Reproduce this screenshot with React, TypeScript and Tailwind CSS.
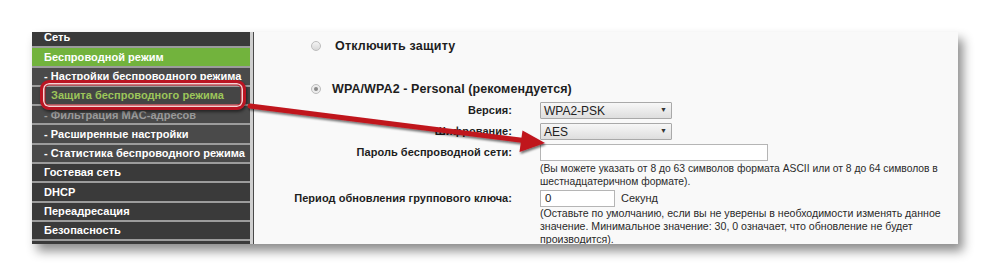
import React from "react";

const font = { fontFamily: '"Liberation Sans", Arial, sans-serif' };

function Row({
  label,
  bg,
  color = "text-white",
  indent = "pl-[12px]",
}: {
  label: string;
  bg: string;
  color?: string;
  indent?: string;
}) {
  return (
    <div
      className={`h-[19.3px] shrink-0 border-b-2 border-[#9c9c9c] flex items-center text-[11px] font-bold tracking-[0.05px] whitespace-nowrap ${indent} ${bg} ${color}`}
    >
      {label}
    </div>
  );
}

function Select({ value }: { value: string }) {
  return (
    <div className="w-[132px] h-[17px] border border-[#a9a9a9] bg-gradient-to-b from-[#f7f7f7] to-[#dedede] flex items-center justify-between pl-[3px] pr-[4px] text-[12px] text-[#222] rounded-[1px]">
      <span>{value}</span>
      <span className="text-[7px] text-[#333]">▼</span>
    </div>
  );
}

export default function App() {
  return (
    <div className="w-[990px] h-[276px] bg-white relative overflow-hidden" style={font}>
      <div className="ml-[32px] mt-[32px] w-[926px] h-[212px] flex overflow-hidden shadow-[5px_7px_10px_rgba(0,0,0,0.45)] bg-[#f8f8f8]">
        {/* Sidebar */}
        <div className="w-[218px] shrink-0 bg-[#3c3c3c] flex flex-col -mt-[3px]">
          <Row label="Сеть" bg="bg-[#3a3a3a]" />
          <Row label="Беспроводной режим" bg="bg-[#72b33d]" />
          <Row label="- Настройки беспроводного режима" bg="bg-[#4a4a4a]" />
          <Row label="Защита беспроводного режима" bg="bg-[#454545]" color="text-[#9cc55a]" indent="pl-[19px]" />
          <Row label="- Фильтрация MAC-адресов" bg="bg-[#4a4a4a]" color="text-[#9a9a9a]" />
          <Row label="- Расширенные настройки" bg="bg-[#4a4a4a]" />
          <Row label="- Статистика беспроводного режима" bg="bg-[#4a4a4a]" />
          <Row label="Гостевая сеть" bg="bg-[#3a3a3a]" />
          <Row label="DHCP" bg="bg-[#3a3a3a]" />
          <Row label="Переадресация" bg="bg-[#3a3a3a]" />
          <Row label="Безопасность" bg="bg-[#3a3a3a]" />
          <Row label="" bg="bg-[#3a3a3a]" />
        </div>
        <div className="w-[3px] shrink-0 bg-[#cfcfcf]" />
        <div className="w-[1px] shrink-0 bg-[#4a4a4a]" />
        {/* Content */}
        <div className="flex-1 bg-[#f9f9f9] pt-[6px] text-[#1e1e1e]">
          <div className="flex items-center h-[16px] pl-[57px]">
            <span className="w-[10px] h-[10px] rounded-full border border-[#bdbdbd] bg-gradient-to-b from-[#f4f4f4] to-[#d8d8d8]" />
            <span className="ml-[14px] text-[12.5px] font-bold tracking-[0.2px]">Отключить защиту</span>
          </div>
          <div className="flex items-center h-[16px] pl-[57px] mt-[27px]">
            <span className="w-[10px] h-[10px] rounded-full border border-[#bdbdbd] bg-[#ececec] flex items-center justify-center">
              <span className="w-[4px] h-[4px] rounded-full bg-[#8a8a8a]" />
            </span>
            <span className="ml-[11px] text-[12.5px] font-bold tracking-[0.1px]">WPA/WPA2 - Personal (рекомендуется)</span>
          </div>
          <div className="grid grid-cols-[258px_1fr] gap-x-[28px] mt-[5px] text-[11px]">
            <div className="h-[17px] flex items-center justify-end font-bold tracking-[0.05px]">Версия:</div>
            <div className="h-[17px]"><Select value="WPA2-PSK" /></div>
            <div className="h-[17px] mt-[4px] flex items-center justify-end font-bold tracking-[0.05px]">Шифрование:</div>
            <div className="h-[17px] mt-[4px]"><Select value="AES" /></div>
            <div className="h-[17px] mt-[4px] flex items-center justify-end font-bold tracking-[0.05px]">Пароль беспроводной сети:</div>
            <div className="h-[17px] mt-[4px]">
              <div className="w-[228px] h-[17px] border border-[#b5b5b5] bg-white" />
            </div>
            <div />
            <div className="mt-[1px] text-[10.3px] leading-[13px] text-[#2a2a2a] whitespace-nowrap">
              (Вы можете указать от 8 до 63 символов формата ASCII или от 8 до 64 символов в
              <br />
              шестнадцатеричном формате).
            </div>
            <div className="h-[17px] mt-[2px] flex items-center justify-end font-bold tracking-[0.05px]">Период обновления группового ключа:</div>
            <div className="h-[17px] mt-[2px] flex items-center">
              <div className="w-[75px] h-[17px] border border-[#b5b5b5] bg-white text-[11.5px] pl-[4px] flex items-center">0</div>
              <span className="ml-[6px] text-[11px] text-[#2a2a2a]">Секунд</span>
            </div>
            <div />
            <div className="mt-0 text-[10.6px] leading-[13px] text-[#2a2a2a] whitespace-nowrap">
              (Оставьте по умолчанию, если вы не уверены в необходимости изменять данное
              <br />
              значение. Минимальное значение: 30, 0 означает, что обновление не будет
              <br />
              производится).
            </div>
          </div>
        </div>
      </div>

      {/* Annotation box */}
      <div className="absolute left-[40px] top-[80px] w-[206px] h-[30px] rounded-[9px] border-[3px] border-[#bb1422] shadow-[inset_0_0_0_1.5px_#f3d6d6,inset_0_0_0_2.5px_#b81420,1px_2px_3px_rgba(0,0,0,0.5)]" />

      {/* Arrow */}
      <svg className="absolute left-0 top-0" width="990" height="276" viewBox="0 0 990 276">
        <defs>
          <filter id="sh" x="-10%" y="-50%" width="120%" height="200%">
            <feDropShadow dx="1" dy="2" stdDeviation="1.2" floodColor="#000" floodOpacity="0.55" />
          </filter>
        </defs>
        <g filter="url(#sh)">
          <line x1="250" y1="106" x2="524" y2="140.5" stroke="#c0141e" strokeWidth="5" strokeLinecap="round" />
          <polygon points="545,143 519.5,152 522.5,130.5" fill="#c0141e" />
        </g>
      </svg>
    </div>
  );
}
